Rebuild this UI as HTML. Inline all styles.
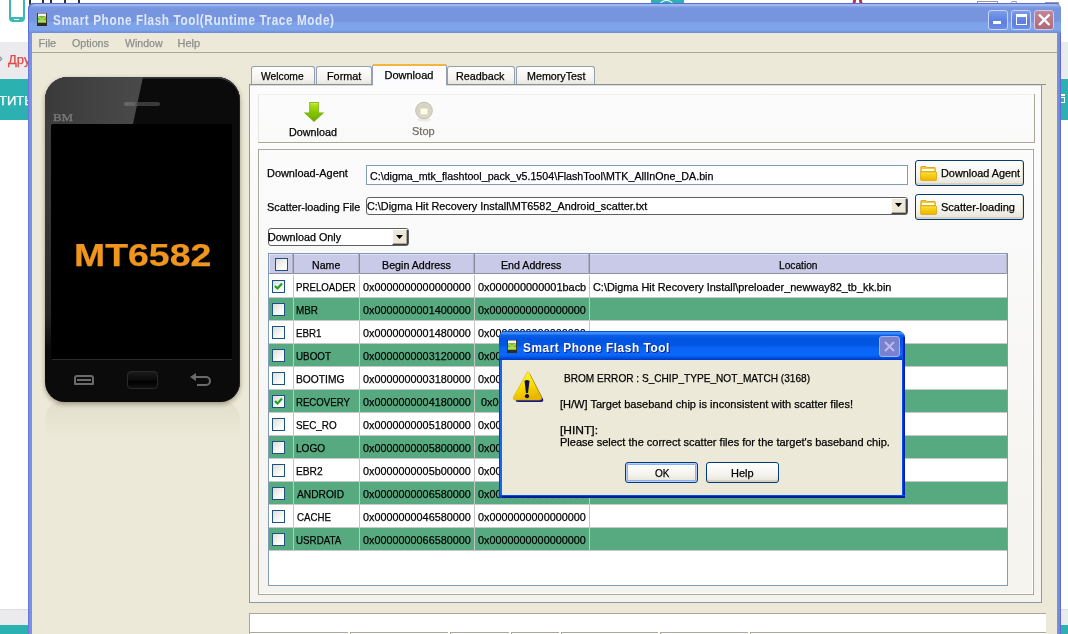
<!DOCTYPE html><html><head><meta charset="utf-8"><style>
html,body{margin:0;padding:0;width:1068px;height:634px;overflow:hidden;background:#fff;position:relative}
#root{left:0;top:0;width:1068px;height:634px;overflow:hidden;will-change:transform}
body *{position:absolute;box-sizing:border-box}
.t{font-family:"Liberation Sans",sans-serif;line-height:1;white-space:pre;transform-origin:0 0;-webkit-text-stroke:0.25px currentColor}
</style></head><body><div id="root">
<div style="left:0px;top:42px;width:1068px;height:37px;background:#ebebee"></div>
<div style="left:0px;top:79px;width:1068px;height:41px;background:#2cb1b1"></div>
<div style="left:0px;top:609px;width:1068px;height:16px;background:#ebebee;border-top:1px solid #dcdce0"></div>
<div style="left:0px;top:625px;width:1068px;height:9px;background:#2cb1b1"></div>
<div style="left:9px;top:-6px;width:16px;height:27.5px;border:2px solid #3db8b8;border-bottom-width:5px;border-radius:4px"></div>
<div style="left:14px;top:18.7px;width:5px;height:1.5px;background:#fff;border-radius:1px"></div>
<div style="left:29px;top:0px;width:2px;height:5px;background:#333"></div>
<div style="left:42px;top:0px;width:2px;height:5px;background:#333"></div>
<div style="left:50px;top:0px;width:2px;height:5px;background:#333"></div>
<div style="left:64px;top:0px;width:2px;height:5px;background:#333"></div>
<div style="left:78px;top:0px;width:2px;height:5px;background:#333"></div>
<div class="t" style="left:8.00px;top:53px;font-size:13px;color:#e04848;transform:scaleX(1.0000);">Дру</div>
<div class="t" style="left:-1.00px;top:53px;font-size:11px;color:#888;transform:scaleX(1.0000);">›</div>
<div class="t" style="left:-1.00px;top:94px;font-size:13px;color:#ffffff;transform:scaleX(1.0000);">ТИТЬ</div>
<div style="left:651px;top:-4px;width:33px;height:7px;background:#2cb1b1"></div>
<div style="left:660px;top:0px;width:13px;height:8px;border:1.5px solid #fff;border-radius:50%"></div>
<div style="left:853px;top:-2px;width:3px;height:5px;background:#c03040;transform:skewX(-10deg)"></div>
<div style="left:859px;top:-2px;width:3px;height:5px;background:#c03040;transform:skewX(10deg)"></div>
<div style="left:977px;top:1px;width:21px;height:4px;border:1px solid #999;border-bottom:none"></div>
<div style="left:1011px;top:1px;width:6px;height:4px;border:1px solid #999;border-bottom:none;border-radius:2px 2px 0 0"></div>
<div style="left:1045px;top:2px;width:14px;height:2px;background:#999"></div>
<div style="left:1060px;top:94px;width:5px;height:2px;background:#fff"></div>
<div style="left:1059px;top:97px;width:6px;height:6px;border:1.6px solid #fff;border-left:none"></div>
<div style="left:28px;top:3px;width:1033px;height:640px;background:linear-gradient(90deg,#5f6cd6,#7890e2 1.5px,#7a92e4 3px,#7a92e4);border-radius:6px 6px 0 0"></div>
<div style="left:28px;top:3px;width:1033px;height:30px;border-radius:6px 6px 0 0;background:linear-gradient(180deg,#6a88dc 0px,#6a88dc 1px,#a2b9ef 1.5px,#9db5ed 2.5px,#7d9ae4 4px,#7794df 6px,#7794df 18px,#7ea3e9 20px,#7fa4ea 27px,#7292e0 29px,#6c8cdc 30px);box-shadow:inset 1px 1px 0 #5a6ad8"></div>
<div style="left:1057px;top:33px;width:4px;height:610px;background:linear-gradient(90deg,#7a92e4,#7088e0 2.5px,#5560d0)"></div>
<div style="left:32px;top:33px;width:1025px;height:610px;background:#ece9d8"></div>
<svg style="left:37px;top:13px" width="10" height="13"><rect x="0" y="0" width="10" height="13" fill="#3a3a3a"/><rect x="1" y="0.5" width="8" height="3" fill="#f4f4f4"/><rect x="1" y="3.5" width="8" height="6.5" fill="#7cc018"/><path d="M1 3.5L5 6.5L9 3.5" fill="none" stroke="#c8ec98" stroke-width="0.9"/><rect x="1" y="7.5" width="8" height="1" fill="#d8f4b8"/><rect x="0" y="10" width="10" height="3" fill="#2c2c2c"/></svg>
<div class="t" style="left:53.16px;top:13px;font-size:14px;font-weight:bold;color:#dfe8fa;transform:scaleX(0.8408);letter-spacing:0.7px;-webkit-text-stroke:0;">Smart Phone Flash Tool(Runtime Trace Mode)</div>
<div style="left:988px;top:10px;width:20px;height:20px;border:1px solid #c8d4f4;border-radius:3px;background:linear-gradient(180deg,#7c9ceb,#5c7ee0 60%,#6c8ce6)"></div>
<div style="left:1011px;top:10px;width:20px;height:20px;border:1px solid #c8d4f4;border-radius:3px;background:linear-gradient(180deg,#7c9ceb,#5c7ee0 60%,#6c8ce6)"></div>
<div style="left:993px;top:21px;width:8px;height:3px;background:#fff"></div>
<div style="left:1016px;top:14px;width:11px;height:11px;border:1.5px solid #fff;border-top-width:3px"></div>
<div style="left:1034px;top:10px;width:20px;height:20px;border:1px solid #d8c8e0;border-radius:3px;background:linear-gradient(180deg,#c08898,#b06878)"></div>
<svg style="left:1034px;top:10px" width="20" height="20"><path d="M5 4.5L15.5 15M15.5 4.5L5 15" stroke="#fff" stroke-width="2.4"/></svg>
<div class="t" style="left:38.50px;top:38px;font-size:11px;color:#8d8d8d;transform:scaleX(1.0000);">File</div>
<div class="t" style="left:71.50px;top:38px;font-size:11px;color:#8d8d8d;transform:scaleX(0.9737);">Options</div>
<div class="t" style="left:124.50px;top:38px;font-size:11px;color:#8d8d8d;transform:scaleX(0.9615);">Window</div>
<div class="t" style="left:177.50px;top:38px;font-size:11px;color:#8d8d8d;transform:scaleX(1.0000);">Help</div>
<div style="left:32px;top:52px;width:1025px;height:1px;background:#aca899"></div>
<div style="left:45px;top:400px;width:195px;height:36px;border-radius:20px 20px 0 0;background:linear-gradient(180deg,rgba(60,50,20,0.06),rgba(60,50,20,0.03) 50%,rgba(60,50,20,0))"></div>
<div style="left:45px;top:77px;width:195px;height:325px;background:#0b0b0b;border-radius:23px 23px 20px 20px;box-shadow:0 2px 5px rgba(40,30,0,0.4),inset 0 1.5px 0 #3a3a3a,inset -1px 0 0 #1e1e1e"></div>
<svg style="left:45px;top:77px" width="195" height="50"><defs><linearGradient id="gl" x1="0" x2="1"><stop offset="0" stop-color="#3a3a3a"/><stop offset="1" stop-color="#4a4a4a"/></linearGradient></defs><path d="M22 0H98L88 47H0V22A22 22 0 0 1 22 0Z" fill="url(#gl)"/></svg>
<div style="left:124px;top:102px;width:36px;height:4px;background:linear-gradient(90deg,#6a6a6a,#606060 30%,#3a3a3a 40%,#3a3a3a);border-radius:2px"></div>
<div class="t" style="left:52.71px;top:113px;font-size:10px;color:#7c7c7c;transform:scaleX(1.2857);font-family:'Liberation Serif',serif;">BM</div>
<div style="left:45px;top:120px;width:8px;height:230px;background:linear-gradient(180deg,#3d3d3d,#383838 40%,#262626 85%,#0b0b0b)"></div>
<div style="left:51px;top:124px;width:181px;height:235px;background:#000;border-radius:2px 0 0 0"></div>
<div style="left:52px;top:359px;width:180px;height:1px;background:#2a2a2a"></div>
<div class="t" style="left:74.09px;top:240px;font-size:31px;font-weight:bold;color:#f0961e;transform:scaleX(1.2072);">MT6582</div>
<div style="left:74px;top:375px;width:20px;height:10px;border:2px solid #6a6a6a;border-radius:3px 3px 1px 1px"></div>
<div style="left:77px;top:379px;width:14px;height:2px;background:#6a6a6a"></div>
<div style="left:127px;top:371px;width:31px;height:18px;border:1px solid #2a2a2a;border-radius:4px;background:linear-gradient(180deg,#1a1a1a,#0a0a0a 50%,#000 60%,#111)"></div>
<svg style="left:189px;top:372px" width="24" height="16"><path d="M6 5H17A4 4 0 0 1 17 13H8" fill="none" stroke="#6a6a6a" stroke-width="2"/><path d="M1 5L7 1V9Z" fill="#6a6a6a"/></svg>
<div style="left:249px;top:84px;width:793px;height:519px;border:1px solid #8c9aa6;border-top-color:#86928f;background:linear-gradient(180deg,#fcfcfe,#f4f3ee)"></div>
<div style="left:250px;top:85px;width:791px;height:1px;background:#dcdcd6"></div>
<div style="left:251px;top:66px;width:64px;height:18px;border:1px solid #94a0b0;border-bottom:none;border-radius:3px 3px 0 0;background:linear-gradient(180deg,#fefefe,#f4f3ee 70%,#e8e6dd)"></div>
<div class="t" style="left:261.00px;top:71px;font-size:11px;color:#000;transform:scaleX(0.9333);">Welcome</div>
<div style="left:316px;top:66px;width:56px;height:18px;border:1px solid #94a0b0;border-bottom:none;border-radius:3px 3px 0 0;background:linear-gradient(180deg,#fefefe,#f4f3ee 70%,#e8e6dd)"></div>
<div class="t" style="left:326.51px;top:71px;font-size:11px;color:#000;transform:scaleX(0.9853);">Format</div>
<div style="left:447px;top:66px;width:68px;height:18px;border:1px solid #94a0b0;border-bottom:none;border-radius:3px 3px 0 0;background:linear-gradient(180deg,#fefefe,#f4f3ee 70%,#e8e6dd)"></div>
<div class="t" style="left:455.52px;top:71px;font-size:11px;color:#000;transform:scaleX(0.9792);">Readback</div>
<div style="left:516px;top:66px;width:79px;height:18px;border:1px solid #94a0b0;border-bottom:none;border-radius:3px 3px 0 0;background:linear-gradient(180deg,#fefefe,#f4f3ee 70%,#e8e6dd)"></div>
<div class="t" style="left:526.53px;top:71px;font-size:11px;color:#000;transform:scaleX(0.9746);">MemoryTest</div>
<div style="left:372px;top:64px;width:75px;height:21px;border:1px solid #94a0b0;border-bottom:none;border-radius:3px 3px 0 0;background:#fcfcfe"></div>
<div style="left:373px;top:64px;width:73px;height:2px;background:#f6b33e;border-radius:2px 2px 0 0"></div>
<div style="left:373px;top:84px;width:73px;height:2px;background:#fcfcfe"></div>
<div class="t" style="left:384.50px;top:70px;font-size:11px;color:#000;transform:scaleX(1.0000);">Download</div>
<div style="left:258px;top:94px;width:777px;height:48px;border-left:1px solid #e6e6e0;border-top:1px solid #f0f0ec;background:linear-gradient(180deg,#fcfcfd,#f9f9f8)"></div>
<svg style="left:303px;top:101px" width="22" height="22"><defs><linearGradient id="ar" x1="0" x2="0" y1="0" y2="1"><stop offset="0" stop-color="#c8ec70"/><stop offset="0.15" stop-color="#a8e010"/><stop offset="0.5" stop-color="#88c800"/><stop offset="1" stop-color="#6aa800"/></linearGradient></defs><path d="M6.3 1H15.8V11.5H21.2L11 21L0.8 11.5H6.3Z" fill="#74b000"/><path d="M7.2 1.8H15V12.3H19L11 19.8L3 12.3H7.2Z" fill="url(#ar)"/></svg>
<div class="t" style="left:289.02px;top:127px;font-size:11px;color:#000;transform:scaleX(0.9787);">Download</div>
<svg style="left:414px;top:101px" width="20" height="22"><ellipse cx="10" cy="18.5" rx="7" ry="2" fill="#ecebe4"/><circle cx="10" cy="9.5" r="8.3" fill="#d6d3c4" stroke="#c2bfae" stroke-width="1"/><circle cx="10" cy="9.5" r="6.8" fill="none" stroke="#dedbcc" stroke-width="0.8"/><rect x="6.5" y="7.5" width="7" height="6" fill="#fffde6"/></svg>
<div class="t" style="left:412.00px;top:126px;font-size:11px;color:#716f64;transform:scaleX(1.0000);">Stop</div>
<div style="left:1034px;top:94px;width:1px;height:49px;background:#aca899"></div>
<div style="left:1041px;top:84px;width:5px;height:1px;background:#86928f"></div>
<div style="left:258px;top:142px;width:777px;height:1px;background:#aca899"></div>
<div style="left:258px;top:143px;width:776px;height:1px;background:#fff"></div>
<div style="left:258px;top:149px;width:776px;height:446px;border:1px solid #aca899;border-right-color:#aca899;background:transparent"></div>
<div style="left:259px;top:150px;width:774px;height:444px;border-right:1px solid #fff;border-bottom:1px solid #fff"></div>
<div class="t" style="left:266.51px;top:168px;font-size:11px;color:#000;transform:scaleX(0.9938);">Download-Agent</div>
<div class="t" style="left:266.52px;top:202px;font-size:11px;color:#000;transform:scaleX(0.9839);">Scatter-loading File</div>
<div style="left:366px;top:165px;width:542px;height:20px;border:1px solid #7f9db9;background:#fff"></div>
<div class="t" style="left:370.00px;top:171px;font-size:11px;color:#000;transform:scaleX(0.9717);">C:\digma_mtk_flashtool_pack_v5.1504\FlashTool\MTK_AllInOne_DA.bin</div>
<div style="left:366px;top:197px;width:542px;height:18px;border:1px solid #5f5f5f;border-radius:3px;background:#fff"></div>
<div style="left:891px;top:198px;width:16px;height:16px;background:#ece9d8;border-top:1px solid #fff;border-left:1px solid #fff;border-right:1px solid #404040;border-bottom:1px solid #404040;box-shadow:inset -1px -1px 0 #aca899"></div>
<svg style="left:895px;top:203px" width="8" height="5"><path d="M0 0H7L3.5 4Z" fill="#000"/></svg>
<div class="t" style="left:366.80px;top:201px;font-size:11px;color:#000;transform:scaleX(0.9859);">C:\Digma Hit Recovery Install\MT6582_Android_scatter.txt</div>
<div style="left:268px;top:228px;width:141px;height:18px;border:1px solid #5f5f5f;border-radius:3px;background:#fff"></div>
<div style="left:392px;top:229px;width:16px;height:16px;background:#ece9d8;border-top:1px solid #fff;border-left:1px solid #fff;border-right:1px solid #404040;border-bottom:1px solid #404040;box-shadow:inset -1px -1px 0 #aca899"></div>
<svg style="left:396px;top:235px" width="8" height="5"><path d="M0 0H7L3.5 4Z" fill="#000"/></svg>
<div class="t" style="left:267.52px;top:232px;font-size:11px;color:#000;transform:scaleX(0.9795);">Download Only</div>
<div style="left:915px;top:160px;width:109px;height:26px;border:1px solid #003c74;border-radius:3px;background:linear-gradient(180deg,#fff,#f4f3ee 60%,#e6e3d6);box-shadow:inset 0 -2px 0 #d6d0c5,inset -1px 0 0 #e2ded2"></div>
<svg style="left:920px;top:166px" width="18" height="16"><defs><linearGradient id="fd160" x1="0" x2="0" y1="0" y2="1"><stop offset="0" stop-color="#fff080"/><stop offset="0.2" stop-color="#f8d820"/><stop offset="1" stop-color="#f0b400"/></linearGradient></defs><path d="M0.8 1.2Q0.8 0.5 1.5 0.5H6L7 1.5H14.6Q15.3 1.5 15.3 2.2V6H0.8Z" fill="#f4c830" stroke="#d0a000" stroke-width="0.8"/><rect x="2" y="3" width="12.2" height="2" fill="#fff"/><path d="M0.6 6H16Q16.6 6 16.6 6.6V13.6Q16.6 14.4 15.8 14.4H1.4Q0.6 14.4 0.6 13.6Z" fill="url(#fd160)" stroke="#d8a400" stroke-width="0.8"/></svg>
<div class="t" style="left:941.01px;top:168px;font-size:11px;color:#000;transform:scaleX(0.9873);">Download Agent</div>
<div style="left:915px;top:194px;width:109px;height:26px;border:1px solid #003c74;border-radius:3px;background:linear-gradient(180deg,#fff,#f4f3ee 60%,#e6e3d6);box-shadow:inset 0 -2px 0 #d6d0c5,inset -1px 0 0 #e2ded2"></div>
<svg style="left:920px;top:200px" width="18" height="16"><defs><linearGradient id="fd194" x1="0" x2="0" y1="0" y2="1"><stop offset="0" stop-color="#fff080"/><stop offset="0.2" stop-color="#f8d820"/><stop offset="1" stop-color="#f0b400"/></linearGradient></defs><path d="M0.8 1.2Q0.8 0.5 1.5 0.5H6L7 1.5H14.6Q15.3 1.5 15.3 2.2V6H0.8Z" fill="#f4c830" stroke="#d0a000" stroke-width="0.8"/><rect x="2" y="3" width="12.2" height="2" fill="#fff"/><path d="M0.6 6H16Q16.6 6 16.6 6.6V13.6Q16.6 14.4 15.8 14.4H1.4Q0.6 14.4 0.6 13.6Z" fill="url(#fd194)" stroke="#d8a400" stroke-width="0.8"/></svg>
<div class="t" style="left:941.00px;top:202px;font-size:11px;color:#000;transform:scaleX(1.0000);">Scatter-loading</div>
<div style="left:268px;top:253px;width:740px;height:333px;border:1px solid #7f9db9;background:#fff"></div>
<div style="left:269px;top:254px;width:738px;height:20px;background:#c9c9e8;border-bottom:1px solid #8e8e9e;box-shadow:inset 1px 1px 0 #e2e0f2"></div>
<div style="left:292px;top:254px;width:1px;height:20px;background:#b0b0c0"></div>
<div style="left:293px;top:254px;width:1px;height:20px;background:#8a8a96"></div>
<div style="left:358px;top:254px;width:1px;height:20px;background:#b0b0c0"></div>
<div style="left:359px;top:254px;width:1px;height:20px;background:#8a8a96"></div>
<div style="left:473px;top:254px;width:1px;height:20px;background:#b0b0c0"></div>
<div style="left:474px;top:254px;width:1px;height:20px;background:#8a8a96"></div>
<div style="left:588px;top:254px;width:1px;height:20px;background:#b0b0c0"></div>
<div style="left:589px;top:254px;width:1px;height:20px;background:#8a8a96"></div>
<div style="left:1006px;top:254px;width:1px;height:20px;background:#b0b0c0"></div>
<div style="left:1007px;top:254px;width:1px;height:20px;background:#8a8a96"></div>
<div style="left:275px;top:258px;width:13px;height:13px;border:1px solid #1c5180;background:linear-gradient(135deg,#dcdcd7,#fbfbf9 70%,#fff)"></div>
<div class="t" style="left:311.54px;top:260px;font-size:11px;color:#000;transform:scaleX(0.9643);">Name</div>
<div class="t" style="left:381.53px;top:260px;font-size:11px;color:#000;transform:scaleX(0.9714);">Begin Address</div>
<div class="t" style="left:500.83px;top:260px;font-size:11px;color:#000;transform:scaleX(0.9672);">End Address</div>
<div class="t" style="left:779.08px;top:260px;font-size:11px;color:#000;transform:scaleX(0.9250);">Location</div>
<div style="left:269px;top:275px;width:738px;height:23px;background:#fff;border-bottom:1px solid #c8c8c8"></div>
<div style="left:293px;top:275px;width:1px;height:23px;background:#c4c4c4"></div>
<div style="left:359px;top:275px;width:1px;height:23px;background:#c4c4c4"></div>
<div style="left:474px;top:275px;width:1px;height:23px;background:#c4c4c4"></div>
<div style="left:589px;top:275px;width:1px;height:23px;background:#c4c4c4"></div>
<div style="left:272px;top:280px;width:13px;height:13px;border:1px solid #1c5180;background:linear-gradient(135deg,#dcdcd7,#fbfbf9 70%,#fff)"></div>
<svg style="left:272px;top:280px" width="13" height="13"><path d="M3 6L5.5 8.5L10 3.5" fill="none" stroke="#21a121" stroke-width="2.2"/></svg>
<div class="t" style="left:295.82px;top:282px;font-size:11px;color:#000;transform:scaleX(0.8788);">PRELOADER</div>
<div class="t" style="left:363.00px;top:282px;font-size:11px;color:#000;transform:scaleX(0.9844);">0x0000000000000000</div>
<div class="t" style="left:477.70px;top:282px;font-size:11px;color:#000;transform:scaleX(0.9935);">0x000000000001bacb</div>
<div class="t" style="left:592.50px;top:282px;font-size:11px;color:#000;transform:scaleX(0.9900);">C:\Digma Hit Recovery Install\preloader_newway82_tb_kk.bin</div>
<div style="left:269px;top:298px;width:738px;height:23px;background:#57aa80;border-bottom:1px solid #c8c8c8"></div>
<div style="left:293px;top:298px;width:1px;height:23px;background:#c4c4c4"></div>
<div style="left:359px;top:298px;width:1px;height:23px;background:#c4c4c4"></div>
<div style="left:474px;top:298px;width:1px;height:23px;background:#c4c4c4"></div>
<div style="left:589px;top:298px;width:1px;height:23px;background:#c4c4c4"></div>
<div style="left:272px;top:303px;width:13px;height:13px;border:1px solid #1c5180;background:linear-gradient(135deg,#dcdcd7,#fbfbf9 70%,#fff)"></div>
<div class="t" style="left:295.80px;top:305px;font-size:11px;color:#000;transform:scaleX(0.9000);">MBR</div>
<div class="t" style="left:363.00px;top:305px;font-size:11px;color:#000;transform:scaleX(0.9844);">0x0000000001400000</div>
<div class="t" style="left:477.70px;top:305px;font-size:11px;color:#000;transform:scaleX(0.9844);">0x0000000000000000</div>
<div style="left:269px;top:321px;width:738px;height:23px;background:#fff;border-bottom:1px solid #c8c8c8"></div>
<div style="left:293px;top:321px;width:1px;height:23px;background:#c4c4c4"></div>
<div style="left:359px;top:321px;width:1px;height:23px;background:#c4c4c4"></div>
<div style="left:474px;top:321px;width:1px;height:23px;background:#c4c4c4"></div>
<div style="left:589px;top:321px;width:1px;height:23px;background:#c4c4c4"></div>
<div style="left:272px;top:326px;width:13px;height:13px;border:1px solid #1c5180;background:linear-gradient(135deg,#dcdcd7,#fbfbf9 70%,#fff)"></div>
<div class="t" style="left:295.81px;top:328px;font-size:11px;color:#000;transform:scaleX(0.8889);">EBR1</div>
<div class="t" style="left:363.00px;top:328px;font-size:11px;color:#000;transform:scaleX(0.9844);">0x0000000001480000</div>
<div class="t" style="left:477.70px;top:328px;font-size:11px;color:#000;transform:scaleX(0.9844);">0x0000000000000000</div>
<div style="left:269px;top:344px;width:738px;height:23px;background:#57aa80;border-bottom:1px solid #c8c8c8"></div>
<div style="left:293px;top:344px;width:1px;height:23px;background:#c4c4c4"></div>
<div style="left:359px;top:344px;width:1px;height:23px;background:#c4c4c4"></div>
<div style="left:474px;top:344px;width:1px;height:23px;background:#c4c4c4"></div>
<div style="left:589px;top:344px;width:1px;height:23px;background:#c4c4c4"></div>
<div style="left:272px;top:349px;width:13px;height:13px;border:1px solid #1c5180;background:linear-gradient(135deg,#dcdcd7,#fbfbf9 70%,#fff)"></div>
<div class="t" style="left:295.81px;top:351px;font-size:11px;color:#000;transform:scaleX(0.8947);">UBOOT</div>
<div class="t" style="left:363.00px;top:351px;font-size:11px;color:#000;transform:scaleX(0.9844);">0x0000000003120000</div>
<div class="t" style="left:477.70px;top:351px;font-size:11px;color:#000;transform:scaleX(0.9844);">0x0000000000000000</div>
<div style="left:269px;top:367px;width:738px;height:23px;background:#fff;border-bottom:1px solid #c8c8c8"></div>
<div style="left:293px;top:367px;width:1px;height:23px;background:#c4c4c4"></div>
<div style="left:359px;top:367px;width:1px;height:23px;background:#c4c4c4"></div>
<div style="left:474px;top:367px;width:1px;height:23px;background:#c4c4c4"></div>
<div style="left:589px;top:367px;width:1px;height:23px;background:#c4c4c4"></div>
<div style="left:272px;top:372px;width:13px;height:13px;border:1px solid #1c5180;background:linear-gradient(135deg,#dcdcd7,#fbfbf9 70%,#fff)"></div>
<div class="t" style="left:295.77px;top:374px;font-size:11px;color:#000;transform:scaleX(0.9320);">BOOTIMG</div>
<div class="t" style="left:363.00px;top:374px;font-size:11px;color:#000;transform:scaleX(0.9844);">0x0000000003180000</div>
<div class="t" style="left:477.70px;top:374px;font-size:11px;color:#000;transform:scaleX(0.9844);">0x0000000000000000</div>
<div style="left:269px;top:390px;width:738px;height:23px;background:#57aa80;border-bottom:1px solid #c8c8c8"></div>
<div style="left:293px;top:390px;width:1px;height:23px;background:#c4c4c4"></div>
<div style="left:359px;top:390px;width:1px;height:23px;background:#c4c4c4"></div>
<div style="left:474px;top:390px;width:1px;height:23px;background:#c4c4c4"></div>
<div style="left:589px;top:390px;width:1px;height:23px;background:#c4c4c4"></div>
<div style="left:272px;top:395px;width:13px;height:13px;border:1px solid #1c5180;background:linear-gradient(135deg,#dcdcd7,#fbfbf9 70%,#fff)"></div>
<svg style="left:272px;top:395px" width="13" height="13"><path d="M3 6L5.5 8.5L10 3.5" fill="none" stroke="#21a121" stroke-width="2.2"/></svg>
<div class="t" style="left:295.82px;top:397px;font-size:11px;color:#000;transform:scaleX(0.8750);">RECOVERY</div>
<div class="t" style="left:363.00px;top:397px;font-size:11px;color:#000;transform:scaleX(0.9844);">0x0000000004180000</div>
<div class="t" style="left:480.70px;top:397px;font-size:11px;color:#000;transform:scaleX(0.9844);">0x0000000000000000</div>
<div style="left:269px;top:413px;width:738px;height:23px;background:#fff;border-bottom:1px solid #c8c8c8"></div>
<div style="left:293px;top:413px;width:1px;height:23px;background:#c4c4c4"></div>
<div style="left:359px;top:413px;width:1px;height:23px;background:#c4c4c4"></div>
<div style="left:474px;top:413px;width:1px;height:23px;background:#c4c4c4"></div>
<div style="left:589px;top:413px;width:1px;height:23px;background:#c4c4c4"></div>
<div style="left:272px;top:418px;width:13px;height:13px;border:1px solid #1c5180;background:linear-gradient(135deg,#dcdcd7,#fbfbf9 70%,#fff)"></div>
<div class="t" style="left:295.80px;top:420px;font-size:11px;color:#000;transform:scaleX(0.8977);">SEC_RO</div>
<div class="t" style="left:363.00px;top:420px;font-size:11px;color:#000;transform:scaleX(0.9844);">0x0000000005180000</div>
<div class="t" style="left:477.70px;top:420px;font-size:11px;color:#000;transform:scaleX(0.9844);">0x0000000000000000</div>
<div style="left:269px;top:436px;width:738px;height:23px;background:#57aa80;border-bottom:1px solid #c8c8c8"></div>
<div style="left:293px;top:436px;width:1px;height:23px;background:#c4c4c4"></div>
<div style="left:359px;top:436px;width:1px;height:23px;background:#c4c4c4"></div>
<div style="left:474px;top:436px;width:1px;height:23px;background:#c4c4c4"></div>
<div style="left:589px;top:436px;width:1px;height:23px;background:#c4c4c4"></div>
<div style="left:272px;top:441px;width:13px;height:13px;border:1px solid #1c5180;background:linear-gradient(135deg,#dcdcd7,#fbfbf9 70%,#fff)"></div>
<div class="t" style="left:295.78px;top:443px;font-size:11px;color:#000;transform:scaleX(0.9167);">LOGO</div>
<div class="t" style="left:363.00px;top:443px;font-size:11px;color:#000;transform:scaleX(0.9844);">0x0000000005800000</div>
<div class="t" style="left:477.70px;top:443px;font-size:11px;color:#000;transform:scaleX(0.9844);">0x0000000000000000</div>
<div style="left:269px;top:459px;width:738px;height:23px;background:#fff;border-bottom:1px solid #c8c8c8"></div>
<div style="left:293px;top:459px;width:1px;height:23px;background:#c4c4c4"></div>
<div style="left:359px;top:459px;width:1px;height:23px;background:#c4c4c4"></div>
<div style="left:474px;top:459px;width:1px;height:23px;background:#c4c4c4"></div>
<div style="left:589px;top:459px;width:1px;height:23px;background:#c4c4c4"></div>
<div style="left:272px;top:464px;width:13px;height:13px;border:1px solid #1c5180;background:linear-gradient(135deg,#dcdcd7,#fbfbf9 70%,#fff)"></div>
<div class="t" style="left:295.77px;top:466px;font-size:11px;color:#000;transform:scaleX(0.9259);">EBR2</div>
<div class="t" style="left:363.00px;top:466px;font-size:11px;color:#000;transform:scaleX(0.9844);">0x0000000005b00000</div>
<div class="t" style="left:477.70px;top:466px;font-size:11px;color:#000;transform:scaleX(0.9844);">0x0000000000000000</div>
<div style="left:269px;top:482px;width:738px;height:23px;background:#57aa80;border-bottom:1px solid #c8c8c8"></div>
<div style="left:293px;top:482px;width:1px;height:23px;background:#c4c4c4"></div>
<div style="left:359px;top:482px;width:1px;height:23px;background:#c4c4c4"></div>
<div style="left:474px;top:482px;width:1px;height:23px;background:#c4c4c4"></div>
<div style="left:589px;top:482px;width:1px;height:23px;background:#c4c4c4"></div>
<div style="left:272px;top:487px;width:13px;height:13px;border:1px solid #1c5180;background:linear-gradient(135deg,#dcdcd7,#fbfbf9 70%,#fff)"></div>
<div class="t" style="left:296.70px;top:489px;font-size:11px;color:#000;transform:scaleX(0.9280);">ANDROID</div>
<div class="t" style="left:363.00px;top:489px;font-size:11px;color:#000;transform:scaleX(0.9844);">0x0000000006580000</div>
<div class="t" style="left:477.70px;top:489px;font-size:11px;color:#000;transform:scaleX(0.9844);">0x0000000000000000</div>
<div style="left:269px;top:505px;width:738px;height:23px;background:#fff;border-bottom:1px solid #c8c8c8"></div>
<div style="left:293px;top:505px;width:1px;height:23px;background:#c4c4c4"></div>
<div style="left:359px;top:505px;width:1px;height:23px;background:#c4c4c4"></div>
<div style="left:474px;top:505px;width:1px;height:23px;background:#c4c4c4"></div>
<div style="left:589px;top:505px;width:1px;height:23px;background:#c4c4c4"></div>
<div style="left:272px;top:510px;width:13px;height:13px;border:1px solid #1c5180;background:linear-gradient(135deg,#dcdcd7,#fbfbf9 70%,#fff)"></div>
<div class="t" style="left:296.70px;top:512px;font-size:11px;color:#000;transform:scaleX(0.8816);">CACHE</div>
<div class="t" style="left:363.00px;top:512px;font-size:11px;color:#000;transform:scaleX(0.9844);">0x0000000046580000</div>
<div class="t" style="left:477.70px;top:512px;font-size:11px;color:#000;transform:scaleX(0.9844);">0x0000000000000000</div>
<div style="left:269px;top:528px;width:738px;height:23px;background:#57aa80;border-bottom:1px solid #c8c8c8"></div>
<div style="left:293px;top:528px;width:1px;height:23px;background:#c4c4c4"></div>
<div style="left:359px;top:528px;width:1px;height:23px;background:#c4c4c4"></div>
<div style="left:474px;top:528px;width:1px;height:23px;background:#c4c4c4"></div>
<div style="left:589px;top:528px;width:1px;height:23px;background:#c4c4c4"></div>
<div style="left:272px;top:533px;width:13px;height:13px;border:1px solid #1c5180;background:linear-gradient(135deg,#dcdcd7,#fbfbf9 70%,#fff)"></div>
<div class="t" style="left:295.81px;top:535px;font-size:11px;color:#000;transform:scaleX(0.8900);">USRDATA</div>
<div class="t" style="left:363.00px;top:535px;font-size:11px;color:#000;transform:scaleX(0.9844);">0x0000000066580000</div>
<div class="t" style="left:477.70px;top:535px;font-size:11px;color:#000;transform:scaleX(0.9844);">0x0000000000000000</div>
<div style="left:249px;top:613px;width:797px;height:30px;border:1px solid #aca899;border-right:none;background:#fff"></div>
<div style="left:249px;top:632px;width:99px;height:12px;border-top:1px solid #aca899;border-left:1px solid #aca899;background:#fff"></div>
<div style="left:350px;top:632px;width:98px;height:12px;border-top:1px solid #aca899;border-left:1px solid #aca899;background:#fff"></div>
<div style="left:450px;top:632px;width:59px;height:12px;border-top:1px solid #aca899;border-left:1px solid #aca899;background:#fff"></div>
<div style="left:511px;top:632px;width:48px;height:12px;border-top:1px solid #aca899;border-left:1px solid #aca899;background:#fff"></div>
<div style="left:561px;top:632px;width:97px;height:12px;border-top:1px solid #aca899;border-left:1px solid #aca899;background:#fff"></div>
<div style="left:660px;top:632px;width:88px;height:12px;border-top:1px solid #aca899;border-left:1px solid #aca899;background:#fff"></div>
<div style="left:750px;top:632px;width:296px;height:12px;border-top:1px solid #aca899;border-left:1px solid #aca899;background:#fff"></div>
<div style="left:499px;top:331px;width:406px;height:167px;border-radius:7px 7px 0 0;background:linear-gradient(90deg,#0a3ad8 0,#0a3ad8 1px,#1664f6 1px,#1664f6 3px,#0831d9 3px)"></div>
<div style="left:499px;top:331px;width:406px;height:29px;border-radius:7px 7px 0 0;background:linear-gradient(180deg,#0a4edc 0px,#0a4edc 0.8px,#3c8efc 1.5px,#3a8af8 2.5px,#0a5ee8 4.5px,#0054e0 8px,#0056e4 14px,#0a64f6 17px,#0a68fa 24px,#0058e8 26px,#0040d0 28px,#0038c8 29px)"></div>
<div style="left:902px;top:337px;width:3px;height:161px;background:linear-gradient(90deg,#0c52ec 0,#0c52ec 1px,#0030c0 1px,#001c9c 3px)"></div>
<div style="left:502px;top:495px;width:403px;height:3px;background:linear-gradient(180deg,#0a4ee6 0,#0a4ee6 1px,#0022a8 1px,#001890 3px)"></div>
<div style="left:499px;top:495px;width:3px;height:3px;background:#0a3ad8"></div>
<div style="left:502px;top:360px;width:400px;height:135px;background:#ece9d8"></div>
<svg style="left:507px;top:340px" width="10" height="13"><rect x="0" y="0" width="10" height="13" fill="#3a3a3a"/><rect x="1" y="0.5" width="8" height="3" fill="#f4f4f4"/><rect x="1" y="3.5" width="8" height="6.5" fill="#7cc018"/><path d="M1 3.5L5 6.5L9 3.5" fill="none" stroke="#c8ec98" stroke-width="0.9"/><rect x="1" y="7.5" width="8" height="1" fill="#d8f4b8"/><rect x="0" y="10" width="10" height="3" fill="#2c2c2c"/></svg>
<div class="t" style="left:522.59px;top:341px;font-size:13px;font-weight:bold;color:#ffffff;transform:scaleX(0.9119);letter-spacing:0.6px;-webkit-text-stroke:0;text-shadow:1px 1px 0 #0a1e80;">Smart Phone Flash Tool</div>
<div style="left:879px;top:336px;width:21px;height:21px;border:1px solid #9fb4f0;border-radius:3px;background:#7a82d0"></div>
<svg style="left:879px;top:336px" width="21" height="21"><path d="M6 6L15 15M15 6L6 15" stroke="#b8bce8" stroke-width="2"/></svg>
<svg style="left:511px;top:370px" width="34" height="34"><defs><linearGradient id="wg" x1="0" x2="0.3" y1="0" y2="1"><stop offset="0" stop-color="#ffff40"/><stop offset="0.6" stop-color="#f8dc00"/><stop offset="1" stop-color="#e8b800"/></linearGradient></defs><path d="M19 4L32 29Q33 32 30 32H7Q4 32 5 29Z" fill="#1a1a80"/><path d="M16.5 2Q17 1 18 2.5L30.5 27Q31.5 30 28.5 30H4Q1.5 30 2.5 27Z" fill="url(#wg)" stroke="#d8a800" stroke-width="0.6"/><path d="M13.5 11Q16 9 18.5 11L17 23H15Z" fill="#10104a"/><circle cx="16" cy="26.2" r="2.1" fill="#10104a"/></svg>
<div class="t" style="left:563.58px;top:373px;font-size:11px;color:#000;transform:scaleX(0.9176);">BROM ERROR : S_CHIP_TYPE_NOT_MATCH (3168)</div>
<div class="t" style="left:560.00px;top:399px;font-size:11px;color:#000;transform:scaleX(1.0034);">[H/W] Target baseband chip is inconsistent with scatter files!</div>
<div class="t" style="left:559.91px;top:425px;font-size:11px;color:#000;transform:scaleX(1.0909);">[HINT]:</div>
<div class="t" style="left:560.00px;top:437px;font-size:11px;color:#000;transform:scaleX(1.0000);">Please select the correct scatter files for the target's baseband chip.</div>
<div style="left:625px;top:462px;width:73px;height:21px;border:1px solid #003c74;border-radius:3px;background:linear-gradient(180deg,#fff,#f4f3ee 60%,#e6e3d6);box-shadow:inset 0 0 0 1px #b8d0f8,inset 0 0 0 2px #8cb0f0"></div>
<div class="t" style="left:654.65px;top:468px;font-size:11px;color:#000;transform:scaleX(0.9133);">OK</div>
<div style="left:706px;top:462px;width:73px;height:21px;border:1px solid #003c74;border-radius:3px;background:linear-gradient(180deg,#fff,#f4f3ee 60%,#e6e3d6);box-shadow:inset 0 -2px 0 #d6d0c5"></div>
<div class="t" style="left:731.00px;top:468px;font-size:11px;color:#000;transform:scaleX(1.0000);">Help</div>
</div></body></html>
